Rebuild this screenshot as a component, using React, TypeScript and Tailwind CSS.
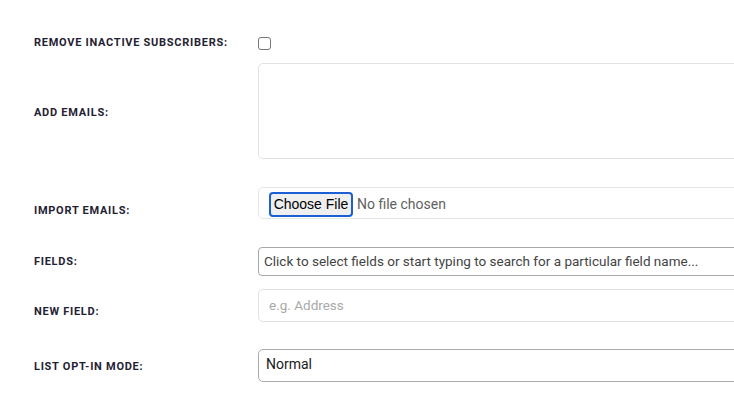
import React from "react";

const labelCls =
  "w-[258px] shrink-0 pl-[34px] text-[11px] leading-[16px] font-bold tracking-[0.066em] uppercase text-[#1f2233]";

export default function App() {
  return (
    <div
      className="w-[734px] h-[414px] overflow-hidden bg-white"
      style={{ fontFamily: "Roboto, 'Liberation Sans', Arial, sans-serif" }}
    >
      <div className="flex flex-col pt-[35px] w-[1000px]">
        {/* Row 1 */}
        <div className="flex items-center h-[16px]">
          <div className={labelCls}>Remove inactive subscribers:</div>
          <div className="w-[13px] h-[13px] rounded-[3px] border border-[#767676] bg-white" />
        </div>

        {/* Row 2 */}
        <div className="flex mt-[12px]">
          <div className={labelCls + " pt-[42px]"}>Add emails:</div>
          <div className="w-[520px] h-[96px] rounded-[5px] border border-[#e3e3e3] bg-white" />
        </div>

        {/* Row 3 */}
        <div className="flex mt-[28px]">
          <div className={labelCls + " pt-[16px]"}>Import emails:</div>
          <div className="w-[520px] h-[32px] rounded-[5px] border border-[#e5e5e5] flex items-center pl-[10px] pt-[3px]">
            <div
              className="h-[25px] w-[84px] rounded-[4px] border-2 border-[#1a5fd6] bg-[#efefef] text-[14px] text-black flex items-center justify-center"
              style={{ fontFamily: "'Liberation Sans', Arial, sans-serif" }}
            >
              Choose File
            </div>
            <span className="ml-[4px] text-[14px] text-[#5f5f5f]">No file chosen</span>
          </div>
        </div>

        {/* Row 4 */}
        <div className="flex mt-[28px]">
          <div className={labelCls + " pt-[7px]"}>Fields:</div>
          <div className="w-[520px] h-[29px] rounded-[4px] border border-[#a8a8a8] flex items-center pl-[5px] text-[13.5px] text-[#444] whitespace-nowrap">
            Click to select fields or start typing to search for a particular field name...
          </div>
        </div>

        {/* Row 5 */}
        <div className="flex mt-[13px]">
          <div className={labelCls + " pt-[15px]"}>New field:</div>
          <div className="w-[520px] h-[33px] rounded-[5px] border border-[#e3e3e3] flex items-center pl-[10px] text-[13.5px] text-[#a9a9a9]">
            e.g. Address
          </div>
        </div>

        {/* Row 6 */}
        <div className="flex mt-[27px]">
          <div className={labelCls + " pt-[10px]"}>List opt-in mode:</div>
          <div className="w-[520px] h-[33px] rounded-[5px] border border-[#ababab] pl-[7px] pt-[5px] text-[14px] leading-[18px] text-[#1a1a1a]">
            Normal
          </div>
        </div>
      </div>
    </div>
  );
}
